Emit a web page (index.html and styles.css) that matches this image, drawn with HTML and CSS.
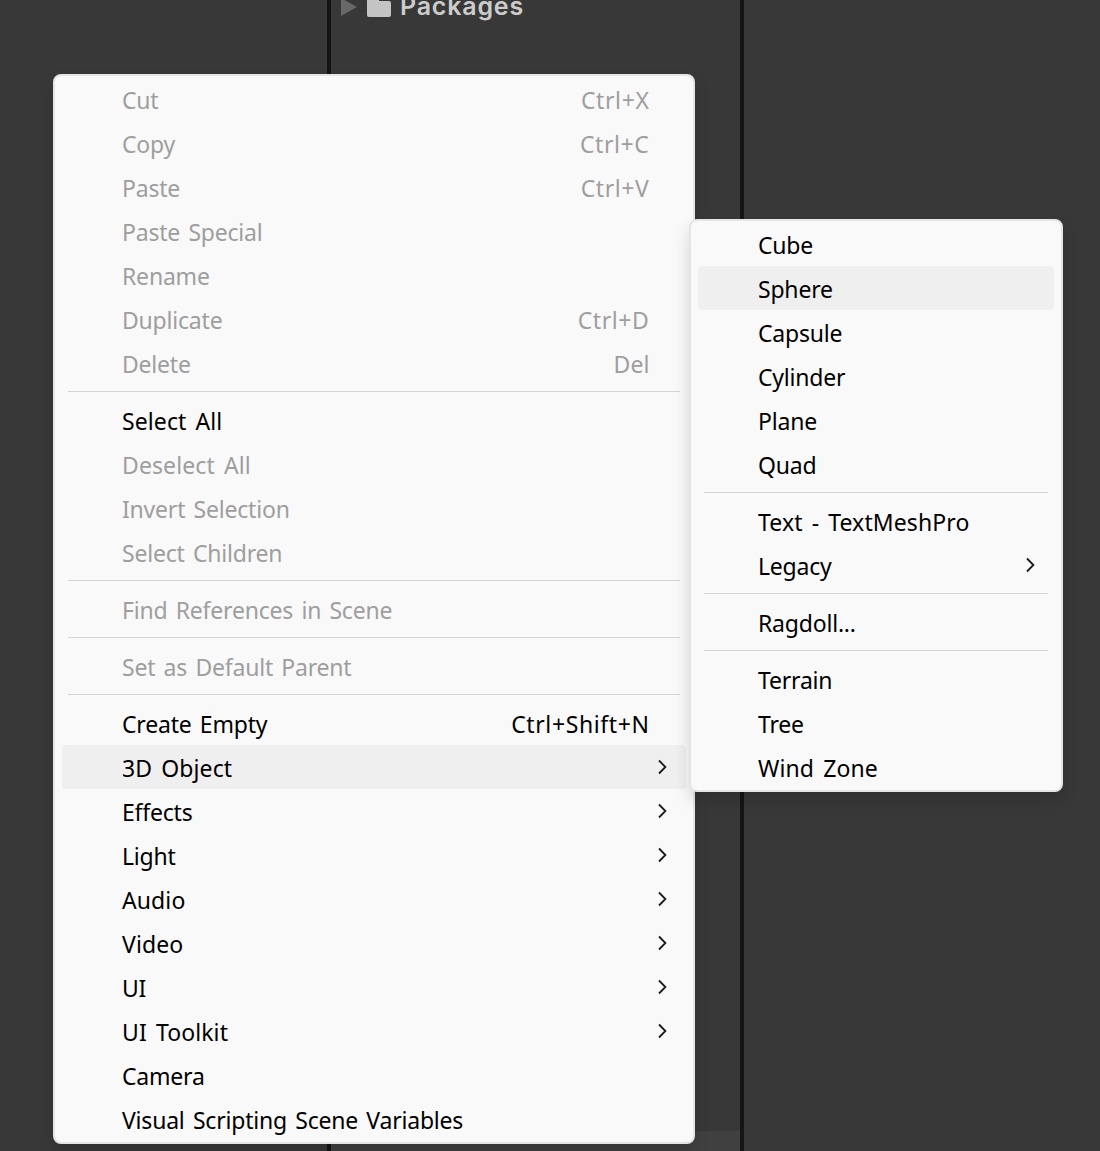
FILE: index.html
```html
<!DOCTYPE html>
<html lang="en">
<head>
<meta charset="utf-8">
<title>Hierarchy context menu</title>
<link rel="stylesheet" href="styles.css">
</head>
<body>
<svg class="defs" aria-hidden="true"><symbol id="chevron" viewBox="0 0 10 16"><path d="M1 1.5 L7.4 8 L1 14.5" fill="none" stroke="#1a1a1a" stroke-width="1.8"/></symbol></svg>
<div class="editor">
  <section class="pane pane-left"></section>
  <section class="pane pane-project">
    <div class="tree-row">
      <svg class="fold" viewBox="0 0 16 18"><path d="M0 0 L16 9 L0 18Z" fill="#686868"/></svg>
      <svg class="folder" viewBox="0 0 24 22"><path d="M0 2 Q0 0 2 0 H10 Q12 0 12 3 V6 H22 Q24 6 24 8 V20 Q24 22 22 22 H2 Q0 22 0 20Z" fill="#c4c4c4"/></svg>
      <span class="tree-label">Packages</span>
    </div>
    <div class="status"></div>
  </section>
  <section class="pane pane-right"></section>
</div>
<nav class="menu menu-main">
  <div class="item off"><span>Cut</span><span class="key">Ctrl+X</span></div>
  <div class="item off"><span>Copy</span><span class="key">Ctrl+C</span></div>
  <div class="item off"><span>Paste</span><span class="key">Ctrl+V</span></div>
  <div class="item off"><span>Paste Special</span></div>
  <div class="item off"><span>Rename</span></div>
  <div class="item off"><span>Duplicate</span><span class="key">Ctrl+D</span></div>
  <div class="item off"><span>Delete</span><span class="key plain">Del</span></div>
  <div class="sep"></div>
  <div class="item loose"><span>Select All</span></div>
  <div class="item off loose"><span>Deselect All</span></div>
  <div class="item off"><span>Invert Selection</span></div>
  <div class="item off"><span>Select Children</span></div>
  <div class="sep"></div>
  <div class="item off"><span>Find References in Scene</span></div>
  <div class="sep"></div>
  <div class="item off"><span>Set as Default Parent</span></div>
  <div class="sep"></div>
  <div class="item"><span>Create Empty</span><span class="key">Ctrl+Shift+N</span></div>
  <div class="item active loose"><span>3D Object</span><svg class="chev"><use href="#chevron"/></svg></div>
  <div class="item"><span>Effects</span><svg class="chev"><use href="#chevron"/></svg></div>
  <div class="item"><span>Light</span><svg class="chev"><use href="#chevron"/></svg></div>
  <div class="item loose"><span>Audio</span><svg class="chev"><use href="#chevron"/></svg></div>
  <div class="item loose"><span>Video</span><svg class="chev"><use href="#chevron"/></svg></div>
  <div class="item"><span>UI</span><svg class="chev"><use href="#chevron"/></svg></div>
  <div class="item loose"><span>UI Toolkit</span><svg class="chev"><use href="#chevron"/></svg></div>
  <div class="item"><span>Camera</span></div>
  <div class="item"><span>Visual Scripting Scene Variables</span></div>
</nav>
<nav class="menu menu-sub">
  <div class="item"><span>Cube</span></div>
  <div class="item active"><span>Sphere</span></div>
  <div class="item"><span>Capsule</span></div>
  <div class="item"><span>Cylinder</span></div>
  <div class="item"><span>Plane</span></div>
  <div class="item"><span>Quad</span></div>
  <div class="sep"></div>
  <div class="item loose"><span>Text - TextMeshPro</span></div>
  <div class="item"><span>Legacy</span><svg class="chev"><use href="#chevron"/></svg></div>
  <div class="sep"></div>
  <div class="item"><span>Ragdoll...</span></div>
  <div class="sep"></div>
  <div class="item"><span>Terrain</span></div>
  <div class="item"><span>Tree</span></div>
  <div class="item loose"><span>Wind Zone</span></div>
</nav>
</body>
</html>
```
FILE: styles.css
```css
* { box-sizing: border-box; }
body {
  margin: 0;
  height: 1151px;
  overflow: hidden;
  position: relative;
  background: #383838;
  font-family: "Noto Sans", "Open Sans", sans-serif;
}
.defs { position: absolute; width: 0; height: 0; }

.editor {
  display: grid;
  grid-template-columns: 327px 409px 1fr;
  gap: 4px;
  height: 1151px;
  background: #151515;
}
.pane { background: #383838; overflow: hidden; }
.pane-project {
  display: flex;
  flex-direction: column;
  justify-content: space-between;
}
.tree-row {
  display: flex;
  align-items: center;
  height: 44px;
  margin-top: -16px;
  padding-left: 10px;
}
.fold { width: 16px; height: 18px; margin-top: 2px; }
.folder { width: 24px; height: 22px; margin: 0 9px 0 10px; }
.tree-label {
  font: 600 25px/44px Inter, sans-serif;
  letter-spacing: 0.8px;
  color: #cccccc;
}
.status { height: 20px; background: #404040; }

.menu {
  position: absolute;
  padding: 1px 0;
  border: 2px solid #e5e5e5;
  border-radius: 8px;
  background: #f9f9f9;
  box-shadow: 0 8px 16px rgba(0, 0, 0, 0.14);
}
.menu-main { left: 53px; top: 74px; width: 642px; }
.menu-sub { left: 689px; top: 219px; width: 374px; }

.item {
  display: flex;
  align-items: center;
  height: 44px;
  margin: 0 7px;
  padding: 2px 18px 0 60px;
  border-radius: 4px;
  font-size: 23px;
  line-height: 42px;
  letter-spacing: -0.2px;
  word-spacing: 2.5px;
  white-space: nowrap;
  color: #000;
}
.item.off { color: #9e9e9e; }
.item.loose { letter-spacing: 0.1px; word-spacing: 3px; }
.item.active { background: #efefef; }
.key { margin-left: auto; margin-right: 18.5px; letter-spacing: 0.6px; }
.key.plain { letter-spacing: 0.1px; }
.chev { width: 10px; height: 16px; margin: -2px 0 0 auto; }
.sep {
  height: 13px;
  padding: 6px 13px;
}
.sep::before {
  content: "";
  display: block;
  height: 1px;
  background: #d5d5d5;
}
```
